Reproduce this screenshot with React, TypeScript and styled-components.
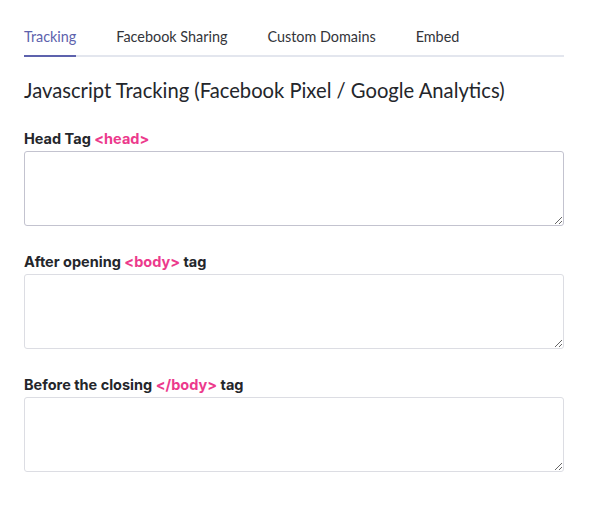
import React from "react";
import styled, { createGlobalStyle } from "styled-components";

const Global = createGlobalStyle`
  html, body { margin: 0; padding: 0; background: #fff; }
  body { font-family: Lato, "Open Sans", sans-serif; color: #24262b; }
  * { box-sizing: border-box; }
`;

const Page = styled.div`
  width: 540px;
  margin-left: 24px;
  padding-top: 28px;
`;

const Tabs = styled.nav`
  display: flex;
  gap: 40px;
  border-bottom: 2px solid #e3e6ee;
`;

const Tab = styled.div<{ $active?: boolean }>`
  font-size: 14.4px;
  line-height: 18px;
  padding-bottom: 9px;
  margin-bottom: -2px;
  color: ${(p) => (p.$active ? "#5d62ad" : "#33353a")};
  border-bottom: 2px solid ${(p) => (p.$active ? "#5d62ad" : "transparent")};
`;

const Title = styled.h1`
  margin: 20px 0 0;
  font-size: 20.2px;
  font-weight: 400;
  line-height: 26px;
  color: #24262b;
`;

const Field = styled.div`
  display: flex;
  flex-direction: column;
  margin-top: 27px;
  & + & { margin-top: 27px; }
`;

const Label = styled.label`
  font-family: Inter, Lato, sans-serif;
  font-size: 14.5px;
  font-weight: 700;
  line-height: 18px;
  margin-bottom: 3px;
  color: #24262b;
`;

const Code = styled.span`
  color: #ec3a8c;
`;

const Area = styled.textarea<{ $focus?: boolean }>`
  width: 540px;
  height: 75px;
  border: 1px solid ${(p) => (p.$focus ? "#c3c3cf" : "#dcdde3")};
  border-radius: 3px;
  resize: vertical;
  font: inherit;
  padding: 8px;
  outline: none;
`;

export default function App() {
  return (
    <>
      <Global />
      <Page>
        <Tabs>
          <Tab $active>Tracking</Tab>
          <Tab>Facebook Sharing</Tab>
          <Tab>Custom Domains</Tab>
          <Tab>Embed</Tab>
        </Tabs>
        <Title>Javascript Tracking (Facebook Pixel / Google Analytics)</Title>
        <Field>
          <Label>
            Head Tag <Code>&lt;head&gt;</Code>
          </Label>
          <Area $focus />
        </Field>
        <Field>
          <Label>
            After opening <Code>&lt;body&gt;</Code> tag
          </Label>
          <Area />
        </Field>
        <Field>
          <Label>
            Before the closing <Code>&lt;/body&gt;</Code> tag
          </Label>
          <Area />
        </Field>
      </Page>
    </>
  );
}
